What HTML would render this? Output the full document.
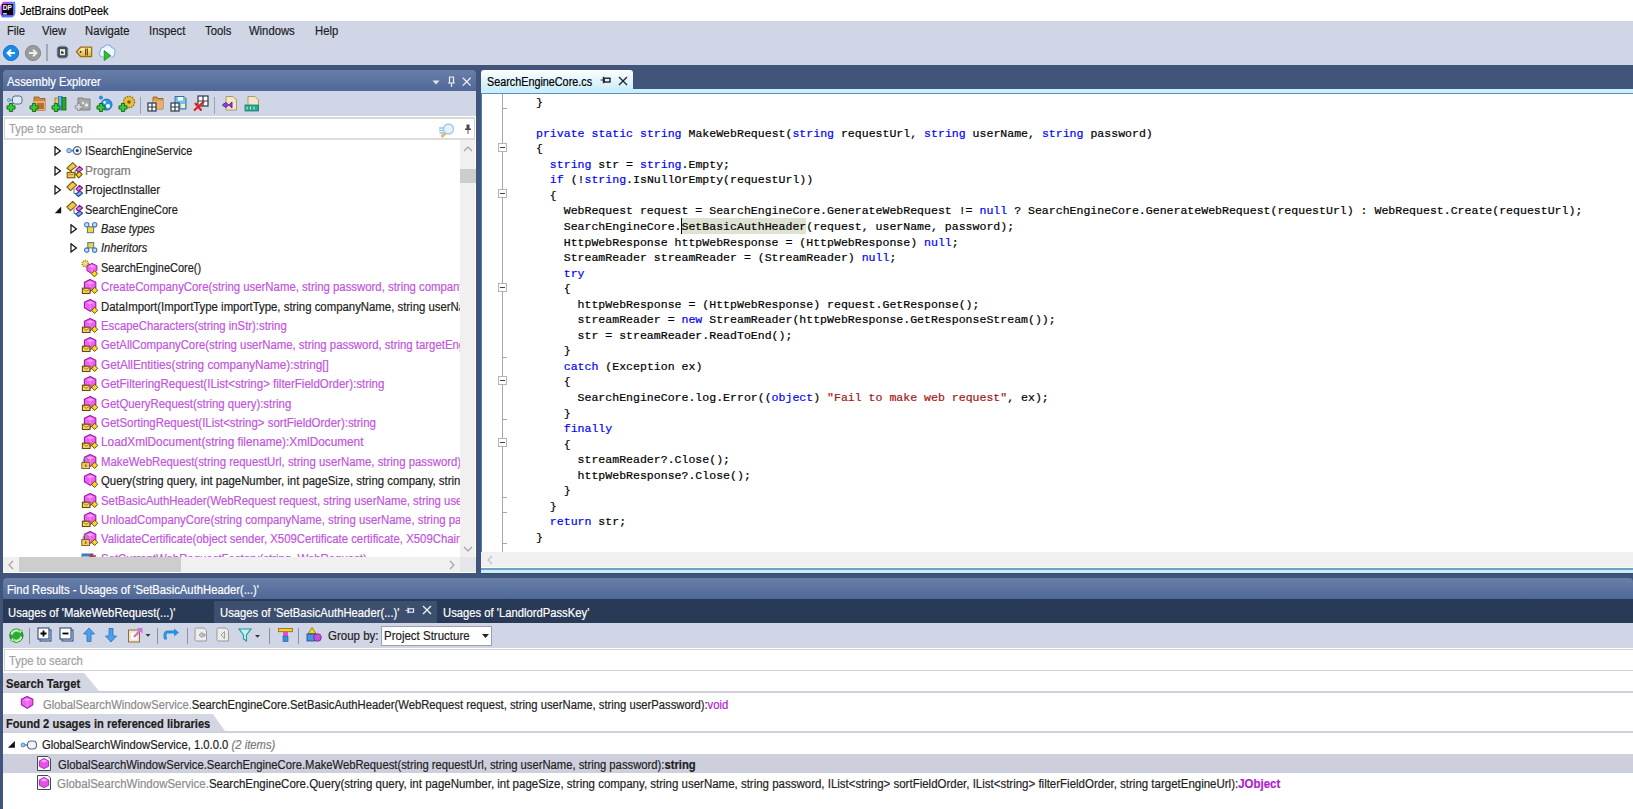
<!DOCTYPE html>
<html><head><meta charset="utf-8">
<style>
*{box-sizing:border-box;margin:0;padding:0}
html,body{width:1633px;height:809px;overflow:hidden}
body{-webkit-text-stroke-width:0.2px;background:#41557a;font-family:"Liberation Sans",sans-serif;font-size:12.3px;color:#1e1e1e;position:relative}
.a{position:absolute}
.t{position:absolute;white-space:pre;line-height:14px;font-size:12.3px;transform:scaleX(.915);transform-origin:0 0}
#title{left:0;top:0;width:1633px;height:21px;background:#fff}
#menubar{left:0;top:21px;width:1633px;height:44px;background:#d0d6e6}
.hdr{background:linear-gradient(#6a7fa8,#4f6898);border-radius:4px 4px 0 0}
.hdr .t{color:#fff}
.tb{background:#d0d6e6}
.sbox{background:#fff;border:1px solid #d3d3d3}
.ph{color:#a2a2a2}
.code{position:absolute;left:536px;top:94.6px;font-family:"Liberation Mono",monospace;font-size:11.55px;line-height:15.54px;white-space:pre;color:#000}
.k{color:#0000ff}
.s{color:#a31515}
.tree .t{color:#1e1e1e}
.tree .t.m{color:#c254de}
.m{color:#d052d8}
.g{color:#8a8a8a}
.row{position:absolute;left:0;width:457px;height:19.4px}
.row .t{top:1px;line-height:19.4px}
.tree .i{font-style:italic}
.tree .g{color:#7a7a7a}
.ic{position:absolute;top:2px;width:18px;height:18px;display:block;overflow:visible}
.hl{background:#dfe3d3;padding:1.5px 0 1px}
.rb{font-weight:bold;color:#1e1e1e}
.rs{color:#1e1e1e}
.rs .g{color:#8c8c8c}
.pv{color:#b020d0}
.it{font-style:italic;color:#7a7a7a}
</style></head><body>
<svg width="0" height="0" style="position:absolute">
<defs>
<symbol id="cube" viewBox="0 0 18 18" overflow="visible"><path d="M9.15 0.4 L14.8 3.2 L14.8 8.8 L9.3 12.4 L3.4 8.8 L3.4 3.2 Z" fill="#f060f0" stroke="#9a1aa8" stroke-width="1.1" stroke-linejoin="round"/><path d="M5.4 3.8 L9.2 2.2 L12.9 3.8 L9.2 5.6 Z" fill="#f8b0f8" opacity="0.8"/><path d="M9.2 5.6 V11" stroke="#f8a0f8" stroke-width="0.7"/></symbol>
<symbol id="dia" viewBox="0 0 18 18" overflow="visible"><path d="M13.6 8.2 L16.8 11.3 L13.6 14.5 L10.6 11.3 Z" fill="#f8d820" stroke="#6a5008" stroke-width="1" stroke-linejoin="round"/></symbol>
<symbol id="env" viewBox="0 0 18 18" overflow="visible"><rect x="1.4" y="9.2" width="7.6" height="5.3" fill="#f4d860" stroke="#6a4a08" stroke-width="1.1"/><path d="M2.4 10.4 L5.2 12.4 L8 10.4" fill="none" stroke="#8a6a18" stroke-width="0.8"/></symbol>
<symbol id="lock" viewBox="0 0 18 18" overflow="visible"><path d="M2.2 8.8 V7 A2.5 2.5 0 0 1 7.2 7 V8.8" fill="none" stroke="#8f8f8f" stroke-width="1.1"/><rect x="0.8" y="8.6" width="7.8" height="6" fill="#f0c868" stroke="#7a5a14" stroke-width="0.9"/><rect x="4.2" y="10.6" width="1.2" height="2" fill="#5a3a00"/></symbol>
<symbol id="gear" viewBox="0 0 18 18" overflow="visible"><circle cx="4.3" cy="3.7" r="3.1" fill="#f4e680" stroke="#a89020" stroke-width="1.6" stroke-dasharray="1.2 0.8"/><circle cx="4.3" cy="3.7" r="1.1" fill="#fffbe0" stroke="#b8a030" stroke-width="0.5"/></symbol>
<symbol id="cls" viewBox="0 0 18 18" overflow="visible"><path d="M6.7 -0.6 L10.6 3.1 L4.5 8.6 L0.9 5 Z" fill="#f2c848" stroke="#7a5a10" stroke-width="1.1" stroke-linejoin="round"/><path d="M8 6.4 V11.5 H10" fill="none" stroke="#5a6a88" stroke-width="1"/><path d="M14 9 L16.6 11.2 L12.4 14.5 L9.8 12 Z" fill="#78b0f0" stroke="#2a4a9a" stroke-width="1.1" stroke-linejoin="round"/><path d="M13.5 3.3 L16.6 6 L12.4 9.3 L10 6.9 Z" fill="#e070f0" stroke="#7a1a8a" stroke-width="1.1" stroke-linejoin="round"/></symbol>
<symbol id="prog" viewBox="0 0 18 18" overflow="visible"><path d="M6.7 -0.4 L10.6 3.4 L4.5 7.8 L0.9 5.2 Z" fill="#f2c848" stroke="#7a5a10" stroke-width="1.1" stroke-linejoin="round"/><path d="M5 7.8 V9.4" stroke="#5a4a10" stroke-width="1.4"/><rect x="1.2" y="9.4" width="7.6" height="5.4" fill="#f4d050" stroke="#7a5410" stroke-width="1.1"/><path d="M2.2 11.2 Q5 12.6 7.8 11.2" fill="none" stroke="#a07a20" stroke-width="0.8"/><path d="M9.2 7 V12.5" stroke="#5a6a88" stroke-width="0.9"/><path d="M13.5 3.4 L16.6 6.1 L12.4 9.2 L10 6.9 Z" fill="#e070f0" stroke="#7a1a8a" stroke-width="1.1" stroke-linejoin="round"/><path d="M13.2 8.5 L16.2 11.4 L12.7 14.8 L10 11.6 Z" fill="#f8d820" stroke="#6a5008" stroke-width="1.1" stroke-linejoin="round"/></symbol>
<symbol id="iface" viewBox="0 0 18 18" overflow="visible"><circle cx="3" cy="7.6" r="2.2" fill="#9ad4f8" stroke="#3a7ab8" stroke-width="0.9"/><path d="M5 7.6 H8" stroke="#4a8ac8" stroke-width="1.8"/><circle cx="11.2" cy="7.6" r="3.9" fill="#f2f6fb" stroke="#5a6a80" stroke-width="1.3"/><circle cx="11.2" cy="7.6" r="1.5" fill="#1a3a80"/></symbol>
<symbol id="base" viewBox="0 0 18 18" overflow="visible"><path d="M5.7 3.7 L8 6.5 M13.65 3.7 L11.2 6.5" stroke="#4a7ac0" stroke-width="1.4"/><circle cx="5.7" cy="3.7" r="2.2" fill="#c8e4fa" stroke="#4a7ac0" stroke-width="1.2"/><circle cx="13.65" cy="3.7" r="2.2" fill="#c8e4fa" stroke="#4a7ac0" stroke-width="1.2"/><rect x="6.4" y="5.8" width="6.2" height="5.9" fill="#f8d820" stroke="#5a7ab0" stroke-width="1.1"/></symbol>
<symbol id="inh" viewBox="0 0 18 18" overflow="visible"><path d="M5.7 10.1 L8 7.5 M13.65 10.1 L11.2 7.5" stroke="#4a7ac0" stroke-width="1.4"/><rect x="6.8" y="2.6" width="5.9" height="5.3" fill="#f8d820" stroke="#5a7ab0" stroke-width="1.1"/><circle cx="5.7" cy="10.1" r="2.2" fill="#c8e4fa" stroke="#4a7ac0" stroke-width="1.2"/><circle cx="13.65" cy="10.1" r="2.2" fill="#c8e4fa" stroke="#4a7ac0" stroke-width="1.2"/></symbol>
<symbol id="fac" viewBox="0 0 18 18" overflow="visible"><rect x="1" y="3" width="11" height="11" fill="#eaf2fa" stroke="#3a6ab0" stroke-width="1"/><rect x="1" y="3" width="11" height="2.5" fill="#3a7ad0"/><path d="M9 5 H15 M11 3 L9 5 L11 7" stroke="#c03030" stroke-width="1.4" fill="none"/></symbol>
<symbol id="iface2" viewBox="0 0 18 16"><circle cx="3" cy="8" r="2" fill="#8cc8f0" stroke="#3a7ab8" stroke-width="0.8"/><path d="M5 8 H8" stroke="#3a7ab8" stroke-width="1.4"/><rect x="7.5" y="4" width="9" height="8" rx="3.5" fill="#eef2f8" stroke="#5a6a80" stroke-width="1.1"/></symbol>
<symbol id="doc" viewBox="0 0 16 17"><path d="M1.5 1.5 H12 L14.5 4 V15.5 H1.5 Z" fill="#f4f6fa" stroke="#404858" stroke-width="1"/><path d="M8 3.6 L12.6 5.9 L12.6 11.3 L8 13.6 L3.4 11.3 L3.4 5.9 Z" fill="#ea4fea" stroke="#9a2a9a" stroke-width="0.9"/><path d="M4.6 6 L8 4.6 L11.4 6 L8 7.6 Z" fill="#f6a8f6"/></symbol>
</defs></svg>
<!-- title bar -->
<div id="title" class="a">
  <svg class="a" style="left:0;top:0" width="18" height="19"><defs><linearGradient id="lg1" x1="0" y1="0" x2="1" y2="1"><stop offset="0" stop-color="#ff3ad0"/><stop offset="0.45" stop-color="#8a4aff"/><stop offset="1" stop-color="#18d8ff"/></linearGradient><linearGradient id="lg2" x1="1" y1="0" x2="0" y2="1"><stop offset="0" stop-color="#20d0ff"/><stop offset="0.5" stop-color="#a040ff"/><stop offset="1" stop-color="#2080ff"/></linearGradient></defs>
  <path d="M3 1.8 H15 V15 L12 17.4 H2 L0.3 14 V6 Z" fill="url(#lg1)"/><path d="M9 2 H14.6 Q15.6 2 15.6 4 V13 L13 17 H3 L1.5 15 Z" fill="url(#lg2)" opacity="0.6"/>
  <rect x="2.1" y="4" width="11" height="11.1" fill="#0c0818"/>
  <text x="2.8" y="9.8" font-family="Liberation Sans" font-weight="bold" font-size="6.6" fill="#fff" style="-webkit-text-stroke-width:0">DP</text>
  <rect x="2.9" y="13" width="4" height="1.6" fill="#c8c8c8"/></svg>
  <div class="t" style="left:20px;top:4px;color:#000;transform:scaleX(.886)">JetBrains dotPeek</div>
</div>
<!-- menu + toolbar -->
<div id="menubar" class="a">
  <div class="t" style="left:7px;top:3px">File</div>
  <div class="t" style="left:42px;top:3px">View</div>
  <div class="t" style="left:85px;top:3px">Navigate</div>
  <div class="t" style="left:149px;top:3px">Inspect</div>
  <div class="t" style="left:205px;top:3px">Tools</div>
  <div class="t" style="left:249px;top:3px">Windows</div>
  <div class="t" style="left:315px;top:3px">Help</div>
  <svg class="a" style="left:2px;top:23px" width="18" height="18"><circle cx="9" cy="9" r="7.6" fill="#1a8ae8" stroke="#0a5ab8" stroke-width="0.8"/><path d="M13 9 H6 M9 5.6 L5.6 9 L9 12.4" fill="none" stroke="#fff" stroke-width="2"/></svg>
  <svg class="a" style="left:24px;top:23px" width="18" height="18"><circle cx="9" cy="9" r="7.6" fill="#9a9a9a" stroke="#7a7a7a" stroke-width="0.8"/><path d="M5 9 H12 M9 5.6 L12.4 9 L9 12.4" fill="none" stroke="#eee" stroke-width="2"/></svg>
  <div class="a" style="left:46px;top:23px;width:2px;height:17px;background:#a0a8b8"></div>
  <svg class="a" style="left:56px;top:24px" width="13" height="14"><rect x="2.8" y="3" width="7.4" height="8.4" fill="#c8d8e0" stroke="#3a4e60" stroke-width="2.2"/><path d="M1.5 3.5 V11 M11.5 3.5 V11 M3.5 1.6 H9.8 M3.5 12.8 H9.8" stroke="#3a4e60" stroke-width="1.5" stroke-dasharray="1 1"/><rect x="4" y="4.5" width="5" height="5.5" fill="#f4eac4"/><path d="M5 6.6 H7 L8 8.4 H5 Z" fill="#10203a"/></svg>
  <svg class="a" style="left:75px;top:24px" width="19" height="14"><defs><linearGradient id="tg" x1="0" y1="0" x2="0" y2="1"><stop offset="0" stop-color="#fff2b0"/><stop offset="1" stop-color="#e0b040"/></linearGradient></defs><path d="M1.4 6.8 L5.6 2.2 H16.6 V11.6 H5.6 Z" fill="url(#tg)" stroke="#9a7010" stroke-width="1.3" stroke-linejoin="round"/><circle cx="5.6" cy="6.9" r="0.9" fill="#222"/><path d="M10.6 3.6 V10.4 M12.4 3.6 V10.4" stroke="#6a5008" stroke-width="1.2"/></svg>
  <svg class="a" style="left:98px;top:21px" width="19" height="20"><path d="M4 15 A3.6 3.6 0 0 1 2.4 9 A3.8 3.8 0 0 1 5.6 5.2 A4.6 4.6 0 0 1 13.8 5.6 A3.6 3.6 0 0 1 16.6 11 A3.2 3.2 0 0 1 14.2 15 Z" fill="#f0f6fd" stroke="#8ab4ec" stroke-width="1.2"/><path d="M6.2 8.6 L12.6 13.6 L6.2 18.6 Z" fill="#30c030" stroke="#108a10" stroke-width="0.8" stroke-linejoin="round"/></svg>
</div>

<!-- Assembly explorer -->
<div class="a" style="left:3px;top:70px;width:473px;height:503px;background:linear-gradient(transparent 20px,#fff 20px)">
  <div class="a hdr" style="left:0;top:0;width:473px;height:21px">
    <div class="t" style="left:4px;top:4.5px">Assembly Explorer</div>
    <svg class="a" style="left:428.5px;top:9.5px" width="9" height="6"><path d="M0.5 0.5 H7.5 L4 4.5 Z" fill="#dfe6f2"/></svg>
    <svg class="a" style="left:443.5px;top:5.5px" width="9" height="12"><path d="M2 1 H7 M2.5 1 V6.5 M6.5 1 V6.5 M1 7 H8 M4.5 7 V11" stroke="#eef2f8" stroke-width="1.2" fill="none"/></svg>
    <svg class="a" style="left:458.5px;top:6.5px" width="10" height="10"><path d="M0.8 0.8 L8.6 8.6 M8.6 0.8 L0.8 8.6" stroke="#eef2f8" stroke-width="1.3"/></svg>
  </div>

  <div class="a tb" style="left:0;top:21px;width:473px;height:25px">
  <svg class="a" style="left:3px;top:4px" width="18" height="18"><rect x="6.5" y="1" width="9.5" height="8" rx="2.5" fill="#dfe8f4" stroke="#5a6a80" stroke-width="1"/><circle cx="3" cy="5" r="1.6" fill="#7ad0f4" stroke="#3a8ac0" stroke-width="0.6"/><path d="M4.6 5 H6.5" stroke="#3a8ac0" stroke-width="1"/><path d="M3.4 8.5 h3.2 v2.4 h2.4 v3.2 h-2.4 v2.4 h-3.2 v-2.4 h-2.4 v-3.2 h2.4 Z" fill="#3cc83c" stroke="#0a6a0a" stroke-width="0.9"/></svg>
  <svg class="a" style="left:26px;top:4px" width="18" height="18"><path d="M5 2 H10 L11 3.5 H16 V15.5 H5 Z" fill="#c88a40" stroke="#9a6020" stroke-width="0.9"/><path d="M5 6 H16 V15.5 H5 Z" fill="#e8b070"/><rect x="8" y="8" width="7" height="6" fill="#b87030"/><path d="M3.4 8.5 h3.2 v2.4 h2.4 v3.2 h-2.4 v2.4 h-3.2 v-2.4 h-2.4 v-3.2 h2.4 Z" fill="#3cc83c" stroke="#0a6a0a" stroke-width="0.9"/></svg>
  <svg class="a" style="left:48px;top:4px" width="18" height="18"><rect x="4" y="3" width="3.5" height="12" fill="#f4c84a" stroke="#8a6a10" stroke-width="0.7"/><rect x="7.5" y="1.5" width="3.5" height="13.5" fill="#5ab8f0" stroke="#2a6ab0" stroke-width="0.7"/><rect x="11" y="2.5" width="4" height="12.5" fill="#2aa82a" stroke="#0a5a0a" stroke-width="0.7"/><path d="M3.4 8.5 h3.2 v2.4 h2.4 v3.2 h-2.4 v2.4 h-3.2 v-2.4 h-2.4 v-3.2 h2.4 Z" fill="#3cc83c" stroke="#0a6a0a" stroke-width="0.9"/></svg>
  <svg class="a" style="left:71px;top:4px" width="18" height="18"><path d="M4 3 H9 L10 4 H16 V15 H4 Z" fill="#a8a8a8" stroke="#7a7a7a" stroke-width="0.9"/><circle cx="12.5" cy="10" r="1.8" fill="#e8e8e8"/><circle cx="9" cy="8" r="1.2" fill="#e8e8e8"/><path d="M3.4 8.4 h2.6 v2.2 h2.2 v2.6 h-2.2 v2.2 h-2.6 v-2.2 h-2.2 v-2.6 h2.2 Z" fill="#d8d8d8" stroke="#8a8a8a" stroke-width="0.8"/></svg>
  <svg class="a" style="left:93px;top:4px" width="18" height="18"><circle cx="10.5" cy="9.6" r="5.5" fill="#2a9ae8" stroke="#1060b0" stroke-width="0.9"/><circle cx="5" cy="2.6" r="1.6" fill="#2a9ae8" stroke="#1060b0" stroke-width="0.6"/><circle cx="12" cy="11" r="2" fill="#fff"/><circle cx="8.6" cy="7.4" r="1.3" fill="#fff"/><path d="M3.4 8.5 h3.2 v2.4 h2.4 v3.2 h-2.4 v2.4 h-3.2 v-2.4 h-2.4 v-3.2 h2.4 Z" fill="#3cc83c" stroke="#0a6a0a" stroke-width="0.9"/></svg>
  <svg class="a" style="left:115px;top:4px" width="18" height="18"><circle cx="11" cy="7" r="5.6" fill="#e8c040" stroke="#9a7010" stroke-width="1.4" stroke-dasharray="1.6 1"/><circle cx="11" cy="7" r="1.8" fill="#7a5a10"/><path d="M3.4 8.5 h3.2 v2.4 h2.4 v3.2 h-2.4 v2.4 h-3.2 v-2.4 h-2.4 v-3.2 h2.4 Z" fill="#3cc83c" stroke="#0a6a0a" stroke-width="0.9"/></svg>
  <div class="a" style="left:137px;top:6px;width:1px;height:17px;background:#9aa2b2"></div>
  <svg class="a" style="left:144px;top:4px" width="18" height="18"><path d="M6 2 H10 L11 3.5 H16 V14 H6 Z" fill="#d89848" stroke="#9a6020" stroke-width="0.9"/><path d="M6 5.5 H16 V14 H6 Z" fill="#e8b070"/><rect x="1" y="8" width="8" height="8" fill="#fff" stroke="#2a3a4a" stroke-width="1.2"/><path d="M5 8 V16 M1 12 H9" stroke="#2a3a4a" stroke-width="1.2"/></svg>
  <svg class="a" style="left:167px;top:4px" width="18" height="18"><path d="M5 1.5 H14 L16 3.5 V14 H5 Z" fill="#7ac0ec" stroke="#2a6a9a" stroke-width="0.9"/><rect x="8" y="2" width="5" height="3.5" fill="#fff"/><rect x="11" y="9" width="4" height="4" fill="#f4f0b0"/><rect x="1" y="8" width="8" height="8" fill="#fff" stroke="#2a3a4a" stroke-width="1.2"/><path d="M5 8 V16 M1 12 H9" stroke="#2a3a4a" stroke-width="1.2"/></svg>
  <svg class="a" style="left:189px;top:4px" width="18" height="18"><rect x="6" y="1" width="10" height="10" fill="#fff" stroke="#2a3a4a" stroke-width="1.2"/><path d="M11 1 V11 M6 6 H16" stroke="#2a3a4a" stroke-width="1.2"/><path d="M2 15.5 L12 6.5 M3 8 L9.5 15.5" stroke="#e02020" stroke-width="2.2"/></svg>
  <div class="a" style="left:211px;top:6px;width:1px;height:17px;background:#9aa2b2"></div>
  <svg class="a" style="left:218px;top:4px" width="18" height="18"><path d="M5 1.5 H12 L15.5 5 V15 H5 Z" fill="#f2e6c8" stroke="#a89060" stroke-width="0.9"/><path d="M1.8 9.5 L5 7.5 L11 13 V7 L5 12.5 L1.8 10.5 Z" fill="#8a40d8" stroke="#5a2090" stroke-width="0.9"/></svg>
  <svg class="a" style="left:240px;top:4px" width="18" height="18"><path d="M5 1.5 H12 L15.5 5 V15 H5 Z" fill="#f2e6c8" stroke="#a89060" stroke-width="0.9"/><rect x="2" y="10" width="13.5" height="6" fill="#28a890" stroke="#107060" stroke-width="0.7"/><path d="M4 11.5 v3 M7.5 11.5 v3 M11 11.5 v3" stroke="#c8f0e0" stroke-width="1"/></svg>
  </div>
  <div class="a sbox" style="left:1px;top:47px;width:471px;height:23px;border-top:2px solid #d8d8d8;border-bottom:2px solid #dcdcdc">
    <div class="t ph" style="left:4px;top:3px">Type to search</div>
    <svg class="a" style="left:433px;top:3px" width="18" height="17"><path d="M1 6 H6 M1 8.5 H5 M1.5 11 H6" stroke="#8cc8ee" stroke-width="1.6"/><path d="M3.5 15 L7.5 11" stroke="#e8b860" stroke-width="3"/><circle cx="10.5" cy="7" r="5" fill="#e4f2fb" stroke="#9ac8e8" stroke-width="1.3"/></svg>
    <svg class="a" style="left:458.5px;top:3.5px" width="9" height="13"><path d="M2.5 1.5 H5.5 V5.5 H7 V7 H1 V5.5 H2.5 Z" fill="#4a4a4a"/><path d="M4 7 V11" stroke="#666" stroke-width="1.1"/></svg>
  </div>
  <div class="a tree" id="tree" style="left:0;top:70px;width:457px;height:417px;overflow:hidden"><div class="row" style="top:1.3px"><svg class="a" style="left:50.5px;top:5px" width="9" height="11"><path d="M1 0.8 L6.4 4.9 L1 9 Z" fill="none" stroke="#111" stroke-width="1.2" stroke-linejoin="miter"/></svg><svg class="ic" style="left:63px" width="18" height="18" viewBox="0 0 18 18"><use href="#iface" width="18" height="18"/></svg><div class="t " style="left:82.2px;transform:scaleX(0.881)">ISearchEngineService</div></div><div class="row" style="top:20.7px"><svg class="a" style="left:50.5px;top:5px" width="9" height="11"><path d="M1 0.8 L6.4 4.9 L1 9 Z" fill="none" stroke="#111" stroke-width="1.2" stroke-linejoin="miter"/></svg><svg class="ic" style="left:63px" width="18" height="18" viewBox="0 0 18 18"><use href="#prog" width="18" height="18"/></svg><div class="t g" style="left:82.2px;transform:scaleX(0.969)">Program</div></div><div class="row" style="top:40.1px"><svg class="a" style="left:50.5px;top:5px" width="9" height="11"><path d="M1 0.8 L6.4 4.9 L1 9 Z" fill="none" stroke="#111" stroke-width="1.2" stroke-linejoin="miter"/></svg><svg class="ic" style="left:63px" width="18" height="18" viewBox="0 0 18 18"><use href="#cls" width="18" height="18"/></svg><div class="t " style="left:82.2px;transform:scaleX(0.923)">ProjectInstaller</div></div><div class="row" style="top:59.5px"><svg class="a" style="left:50.5px;top:5px" width="9" height="10"><path d="M0.8 8.2 L7.2 1.5 L7.2 8.2 Z" fill="#111"/></svg><svg class="ic" style="left:63px" width="18" height="18" viewBox="0 0 18 18"><use href="#cls" width="18" height="18"/></svg><div class="t " style="left:82.2px;transform:scaleX(0.894)">SearchEngineCore</div></div><div class="row" style="top:78.9px"><svg class="a" style="left:66.5px;top:5px" width="9" height="11"><path d="M1 0.8 L6.4 4.9 L1 9 Z" fill="none" stroke="#111" stroke-width="1.2" stroke-linejoin="miter"/></svg><svg class="ic" style="left:78px" width="18" height="18" viewBox="0 0 18 18"><use href="#base" width="18" height="18"/></svg><div class="t i" style="left:98.2px;transform:scaleX(0.884)">Base types</div></div><div class="row" style="top:98.3px"><svg class="a" style="left:66.5px;top:5px" width="9" height="11"><path d="M1 0.8 L6.4 4.9 L1 9 Z" fill="none" stroke="#111" stroke-width="1.2" stroke-linejoin="miter"/></svg><svg class="ic" style="left:78px" width="18" height="18" viewBox="0 0 18 18"><use href="#inh" width="18" height="18"/></svg><div class="t i" style="left:98.2px;transform:scaleX(0.904)">Inheritors</div></div><div class="row" style="top:117.7px"><svg class="ic" style="left:78px" width="18" height="18" viewBox="0 0 18 18"><use href="#gear" width="18" height="18"/><use href="#cube" x="3" y="3" width="15.7" height="15.7"/><use href="#dia" x="-0.2" y="2.4" width="18" height="18"/></svg><div class="t " style="left:98.2px;transform:scaleX(0.893)">SearchEngineCore()</div></div><div class="row" style="top:137.1px"><svg class="ic" style="left:78px" width="18" height="18" viewBox="0 0 18 18"><use href="#cube" width="18" height="18"/><use href="#env" width="18" height="18"/><use href="#dia" width="18" height="18"/></svg><div class="t m" style="left:98.2px;transform:scaleX(0.925)">CreateCompanyCore(string userName, string password, string companyName)</div></div><div class="row" style="top:156.5px"><svg class="ic" style="left:78px" width="18" height="18" viewBox="0 0 18 18"><use href="#cube" width="18" height="18"/><use href="#dia" width="18" height="18"/></svg><div class="t " style="left:98.2px;transform:scaleX(0.925)">DataImport(ImportType importType, string companyName, string userName)</div></div><div class="row" style="top:175.9px"><svg class="ic" style="left:78px" width="18" height="18" viewBox="0 0 18 18"><use href="#cube" width="18" height="18"/><use href="#env" width="18" height="18"/><use href="#dia" width="18" height="18"/></svg><div class="t m" style="left:98.2px;transform:scaleX(0.921)">EscapeCharacters(string inStr):string</div></div><div class="row" style="top:195.3px"><svg class="ic" style="left:78px" width="18" height="18" viewBox="0 0 18 18"><use href="#cube" width="18" height="18"/><use href="#env" width="18" height="18"/><use href="#dia" width="18" height="18"/></svg><div class="t m" style="left:98.2px;transform:scaleX(0.925)">GetAllCompanyCore(string userName, string password, string targetEngineUrl)</div></div><div class="row" style="top:214.7px"><svg class="ic" style="left:78px" width="18" height="18" viewBox="0 0 18 18"><use href="#cube" width="18" height="18"/><use href="#env" width="18" height="18"/><use href="#dia" width="18" height="18"/></svg><div class="t m" style="left:98.2px;transform:scaleX(0.955)">GetAllEntities(string companyName):string[]</div></div><div class="row" style="top:234.1px"><svg class="ic" style="left:78px" width="18" height="18" viewBox="0 0 18 18"><use href="#cube" width="18" height="18"/><use href="#env" width="18" height="18"/><use href="#dia" width="18" height="18"/></svg><div class="t m" style="left:98.2px;transform:scaleX(0.936)">GetFilteringRequest(IList&lt;string&gt; filterFieldOrder):string</div></div><div class="row" style="top:253.5px"><svg class="ic" style="left:78px" width="18" height="18" viewBox="0 0 18 18"><use href="#cube" width="18" height="18"/><use href="#env" width="18" height="18"/><use href="#dia" width="18" height="18"/></svg><div class="t m" style="left:98.2px;transform:scaleX(0.928)">GetQueryRequest(string query):string</div></div><div class="row" style="top:272.9px"><svg class="ic" style="left:78px" width="18" height="18" viewBox="0 0 18 18"><use href="#cube" width="18" height="18"/><use href="#env" width="18" height="18"/><use href="#dia" width="18" height="18"/></svg><div class="t m" style="left:98.2px;transform:scaleX(0.931)">GetSortingRequest(IList&lt;string&gt; sortFieldOrder):string</div></div><div class="row" style="top:292.3px"><svg class="ic" style="left:78px" width="18" height="18" viewBox="0 0 18 18"><use href="#cube" width="18" height="18"/><use href="#env" width="18" height="18"/><use href="#dia" width="18" height="18"/></svg><div class="t m" style="left:98.2px;transform:scaleX(0.96)">LoadXmlDocument(string filename):XmlDocument</div></div><div class="row" style="top:311.7px"><svg class="ic" style="left:78px" width="18" height="18" viewBox="0 0 18 18"><use href="#cube" width="18" height="18"/><use href="#lock" width="18" height="18"/><use href="#dia" width="18" height="18"/></svg><div class="t m" style="left:98.2px;transform:scaleX(0.925)">MakeWebRequest(string requestUrl, string userName, string password):string</div></div><div class="row" style="top:331.1px"><svg class="ic" style="left:78px" width="18" height="18" viewBox="0 0 18 18"><use href="#cube" width="18" height="18"/><use href="#dia" width="18" height="18"/></svg><div class="t " style="left:98.2px;transform:scaleX(0.925)">Query(string query, int pageNumber, int pageSize, string company, string userName)</div></div><div class="row" style="top:350.5px"><svg class="ic" style="left:78px" width="18" height="18" viewBox="0 0 18 18"><use href="#cube" width="18" height="18"/><use href="#env" width="18" height="18"/><use href="#dia" width="18" height="18"/></svg><div class="t m" style="left:98.2px;transform:scaleX(0.925)">SetBasicAuthHeader(WebRequest request, string userName, string userPassword):void</div></div><div class="row" style="top:369.9px"><svg class="ic" style="left:78px" width="18" height="18" viewBox="0 0 18 18"><use href="#cube" width="18" height="18"/><use href="#env" width="18" height="18"/><use href="#dia" width="18" height="18"/></svg><div class="t m" style="left:98.2px;transform:scaleX(0.925)">UnloadCompanyCore(string companyName, string userName, string password)</div></div><div class="row" style="top:389.3px"><svg class="ic" style="left:78px" width="18" height="18" viewBox="0 0 18 18"><use href="#cube" width="18" height="18"/><use href="#lock" width="18" height="18"/><use href="#dia" width="18" height="18"/></svg><div class="t m" style="left:98.2px;transform:scaleX(0.925)">ValidateCertificate(object sender, X509Certificate certificate, X509Chain chain)</div></div><div class="row" style="top:408.7px"><svg class="ic" style="left:78px" width="18" height="18" viewBox="0 0 18 18"><use href="#fac" width="18" height="18"/></svg><div class="t m" style="left:98.2px;transform:scaleX(0.925)">SetCurrentWebRequestFactory(string, WebRequest)</div></div></div>
  <!-- v scrollbar -->
  <div class="a" style="left:456.5px;top:70px;width:15.5px;height:417px;background:#f0f0f0">
    <svg class="a" style="left:3px;top:6px" width="10" height="6"><path d="M1 5 L5 1 L9 5" fill="none" stroke="#a0a0a0" stroke-width="1.1"/></svg>
    <div class="a" style="left:0;top:29px;width:16px;height:14px;background:#cdcdcd"></div>
    <svg class="a" style="left:3.5px;top:406px" width="10" height="6"><path d="M1 1 L5 5 L9 1" fill="none" stroke="#a0a0a0" stroke-width="1.1"/></svg>
  </div>
  <!-- h scrollbar -->
  <div class="a" style="left:0;top:487px;width:473px;height:16px;background:#f0f0f0">
    <svg class="a" style="left:5px;top:3px" width="6" height="10"><path d="M5 1 L1 5 L5 9" fill="none" stroke="#a0a0a0" stroke-width="1.1"/></svg>
    <div class="a" style="left:16px;top:0;width:162px;height:15px;background:#cdcdcd"></div>
    <svg class="a" style="left:446px;top:3px" width="6" height="10"><path d="M1 1 L5 5 L1 9" fill="none" stroke="#a0a0a0" stroke-width="1.1"/></svg>
    <div class="a" style="left:457px;top:0;width:16px;height:15px;background:#e6e6ea"></div>
    <div class="a" style="left:0;top:15px;width:473px;height:1px;background:#fff"></div>
  </div>
</div>

<!-- Editor -->
<div class="a" style="left:481px;top:89px;width:1152px;height:484px;background:#cbeefb"></div>
<div class="a" style="left:481px;top:93px;width:1152px;height:1px;background:#5b8fc1"></div>
<div class="a" style="left:481px;top:94px;width:1152px;height:458px;background:#fff"></div>
<div class="a" style="left:481px;top:94px;width:1px;height:474px;background:#4a80b0"></div>
<div class="a" style="left:481px;top:552px;width:1152px;height:15px;background:#f0f0f0"></div>
<div class="a" style="left:481px;top:567px;width:1152px;height:1px;background:#fdfbf8"></div>
<div class="a" style="left:481px;top:568px;width:1152px;height:2px;background:#6ea0c8"></div>
<div class="a" style="left:481px;top:573px;width:1152px;height:1px;background:#3a4a6a"></div>
<div class="a" style="left:481px;top:70px;width:152px;height:19px;background:linear-gradient(#fdfeff,#cbeefb);border-radius:3px 3px 0 0">
  <div class="t" style="left:6px;top:5px;color:#000;transform:scaleX(.878)">SearchEngineCore.cs</div>
  <svg class="a" style="left:119px;top:6px" width="12" height="9"><path d="M0.5 4 H3" stroke="#555" stroke-width="1.2"/><path d="M3.5 0.8 V7.2" stroke="#222" stroke-width="1.4"/><rect x="4.2" y="2.2" width="5.8" height="3.8" fill="none" stroke="#222" stroke-width="1.4"/></svg>
  <svg class="a" style="left:137px;top:6px" width="10" height="10"><path d="M1 1 L9 9 M9 1 L1 9" stroke="#222" stroke-width="1.3"/></svg>
</div>
<svg class="a" style="left:487px;top:555px" width="6" height="10"><path d="M5 1 L1 5 L5 9" fill="none" stroke="#c0c0c0" stroke-width="1.1"/></svg>
<div class="a" style="left:502px;top:94px;width:1px;height:458px;background:#a8a8a8"></div>
<div class="a" style="left:498px;top:142.7px;width:9px;height:9px;background:#fff;border:1px solid #b4b4b4"><div class="a" style="left:1px;top:3px;width:5px;height:1px;background:#444"></div></div><div class="a" style="left:498px;top:189.3px;width:9px;height:9px;background:#fff;border:1px solid #b4b4b4"><div class="a" style="left:1px;top:3px;width:5px;height:1px;background:#444"></div></div><div class="a" style="left:498px;top:282.6px;width:9px;height:9px;background:#fff;border:1px solid #b4b4b4"><div class="a" style="left:1px;top:3px;width:5px;height:1px;background:#444"></div></div><div class="a" style="left:498px;top:375.8px;width:9px;height:9px;background:#fff;border:1px solid #b4b4b4"><div class="a" style="left:1px;top:3px;width:5px;height:1px;background:#444"></div></div><div class="a" style="left:498px;top:437.9px;width:9px;height:9px;background:#fff;border:1px solid #b4b4b4"><div class="a" style="left:1px;top:3px;width:5px;height:1px;background:#444"></div></div><div class="a" style="left:502px;top:108.0px;width:5px;height:1px;background:#a8a8a8"></div><div class="a" style="left:502px;top:356.6px;width:5px;height:1px;background:#a8a8a8"></div><div class="a" style="left:502px;top:418.8px;width:5px;height:1px;background:#a8a8a8"></div><div class="a" style="left:502px;top:496.5px;width:5px;height:1px;background:#a8a8a8"></div><div class="a" style="left:502px;top:512.0px;width:5px;height:1px;background:#a8a8a8"></div><div class="a" style="left:502px;top:543.1px;width:5px;height:1px;background:#a8a8a8"></div>
<div class="a" style="left:681px;top:218px;width:2px;height:16px;background:#000"></div>
<div class="code" id="code"><span class="br">}</span>

<span class="k">private</span> <span class="k">static</span> <span class="k">string</span> MakeWebRequest(<span class="k">string</span> requestUrl, <span class="k">string</span> userName, <span class="k">string</span> password)
<span class="br">{</span>
  <span class="k">string</span> str = <span class="k">string</span>.Empty;
  <span class="k">if</span> (!<span class="k">string</span>.IsNullOrEmpty(requestUrl))
  <span class="br">{</span>
    WebRequest request = SearchEngineCore.GenerateWebRequest != <span class="k">null</span> ? SearchEngineCore.GenerateWebRequest(requestUrl) : WebRequest.Create(requestUrl);
    SearchEngineCore.<span class="hl">SetBasicAuthHeader</span>(request, userName, password);
    HttpWebResponse httpWebResponse = (HttpWebResponse) <span class="k">null</span>;
    StreamReader streamReader = (StreamReader) <span class="k">null</span>;
    <span class="k">try</span>
    <span class="br">{</span>
      httpWebResponse = (HttpWebResponse) request.GetResponse();
      streamReader = <span class="k">new</span> StreamReader(httpWebResponse.GetResponseStream());
      str = streamReader.ReadToEnd();
    <span class="br">}</span>
    <span class="k">catch</span> (Exception ex)
    <span class="br">{</span>
      SearchEngineCore.log.Error((<span class="k">object</span>) <span class="s">&quot;Fail to make web request&quot;</span>, ex);
    <span class="br">}</span>
    <span class="k">finally</span>
    <span class="br">{</span>
      streamReader?.Close();
      httpWebResponse?.Close();
    <span class="br">}</span>
  <span class="br">}</span>
  <span class="k">return</span> str;
<span class="br">}</span></div>

<!-- Find results -->
<div class="a" style="left:3px;top:578px;width:1630px;height:231px;background:linear-gradient(transparent 20px,#fff 20px)">
  <div class="a hdr" style="left:0;top:0;width:1630px;height:21px">
    <div class="t" style="left:4px;top:4.5px">Find Results - Usages of 'SetBasicAuthHeader(...)'</div>
  </div>
  <div class="a" style="left:0;top:21px;width:1630px;height:24px;background:#293a56">
    <div class="t" style="left:5px;top:7px;color:#fff">Usages of 'MakeWebRequest(...)'</div>
    <div class="a" style="left:211px;top:2px;width:223px;height:22px;background:#3d4f6e"></div>
    <div class="t" style="left:217px;top:7px;color:#fff">Usages of 'SetBasicAuthHeader(...)'</div>
    <svg class="a" style="left:402px;top:8px" width="10" height="8"><path d="M0.5 3.5 H2.5" stroke="#dde" stroke-width="1"/><path d="M3 0.8 V6.2" stroke="#eef" stroke-width="1.2"/><rect x="3.6" y="1.8" width="5" height="3.4" fill="none" stroke="#eef" stroke-width="1.1"/></svg>
    <svg class="a" style="left:419px;top:6px" width="10" height="10"><path d="M1 1 L9 9 M9 1 L1 9" stroke="#eef2f8" stroke-width="1.3"/></svg>
    <div class="t" style="left:440px;top:7px;color:#fff">Usages of 'LandlordPassKey'</div>
  </div>
  <div class="a tb" style="left:0;top:45px;width:1630px;height:25px">
  <svg class="a" style="left:4px;top:3px" width="18" height="18"><circle cx="9.4" cy="9.6" r="6.6" fill="#30a838" stroke="#107a18" stroke-width="1"/><path d="M4.6 8.6 A4.8 4.8 0 0 1 13.2 6.4" fill="none" stroke="#b8f8b0" stroke-width="2.2"/><path d="M14.2 10.6 A4.8 4.8 0 0 1 5.6 12.8" fill="none" stroke="#b8f8b0" stroke-width="2.2"/><path d="M11.4 3.2 L15.4 4.6 L13.2 8 Z M7.4 16 L3.4 14.6 L5.6 11.2 Z" fill="#c8f8c0" stroke="#2a9a30" stroke-width="0.6"/></svg>
  <div class="a" style="left:26px;top:5px;width:1px;height:16px;background:#8a92a4"></div>
  <svg class="a" style="left:33px;top:3px" width="18" height="18"><rect x="4" y="4" width="11" height="11" fill="#c8d8f0" stroke="#2a4a7a" stroke-width="1"/><rect x="2" y="2" width="11" height="11" fill="#fff" stroke="#2a4a7a" stroke-width="1.1"/><path d="M7.5 4.5 V10.5 M4.5 7.5 H10.5" stroke="#000" stroke-width="1.8"/></svg>
  <svg class="a" style="left:55px;top:3px" width="18" height="18"><rect x="4" y="4" width="11" height="11" fill="#c8d8f0" stroke="#2a4a7a" stroke-width="1"/><rect x="2" y="2" width="11" height="11" fill="#fff" stroke="#2a4a7a" stroke-width="1.1"/><path d="M4.5 7.5 H10.5" stroke="#000" stroke-width="1.8"/></svg>
  <svg class="a" style="left:79px;top:3px" width="14" height="18"><path d="M7 2 L12.5 8 H9 V15.5 H5 V8 H1.5 Z" fill="#4aa0ec" stroke="#2a70c0" stroke-width="0.8"/></svg>
  <svg class="a" style="left:101px;top:3px" width="14" height="18"><path d="M7 16 L12.5 10 H9 V2.5 H5 V10 H1.5 Z" fill="#4aa0ec" stroke="#2a70c0" stroke-width="0.8"/></svg>
  <svg class="a" style="left:124px;top:3px" width="26" height="18"><rect x="1.5" y="4" width="11" height="12" fill="#f2e4c4" stroke="#8a7040" stroke-width="1"/><rect x="4" y="6.5" width="6" height="7" fill="#fff"/><path d="M7 11 L13 4.5" stroke="#d070d8" stroke-width="2.4"/><path d="M10 2 H15.5 V7.5 Z" fill="#d070d8"/><path d="M18.5 8 H23.5 L21 10.8 Z" fill="#333"/></svg>
  <div class="a" style="left:154px;top:5px;width:1px;height:16px;background:#8a92a4"></div>
  <svg class="a" style="left:160px;top:3px" width="18" height="18"><path d="M2 12 V8.5 A2.5 2.5 0 0 1 4.5 6 H12" fill="none" stroke="#2a90e0" stroke-width="3"/><path d="M11 2.5 L16 6.5 L11 10.5 Z" fill="#2a90e0"/><path d="M1 12.5 H4" stroke="#2a90e0" stroke-width="2"/></svg>
  <div class="a" style="left:184px;top:5px;width:1px;height:16px;background:#8a92a4"></div>
  <svg class="a" style="left:190px;top:3px" width="16" height="18"><path d="M2 3.5 Q2 2 3.5 2 H11 L13.5 4.5 V15 H3.5 Q2 15 2 13.5 Z" fill="#ececec" stroke="#9a9a9a" stroke-width="1"/><path d="M6 9 L9 6.5 V8 H12 V10 H9 V11.5 Z" fill="#d0d0d0" stroke="#8a8a8a" stroke-width="0.8"/></svg>
  <svg class="a" style="left:212px;top:3px" width="16" height="18"><path d="M2 3.5 Q2 2 3.5 2 H11 L13.5 4.5 V15 H3.5 Q2 15 2 13.5 Z" fill="#ececec" stroke="#9a9a9a" stroke-width="1"/><path d="M6 9 L9.5 5.5 V12.5 Z" fill="#e8e8e8" stroke="#8a8a8a" stroke-width="0.8"/></svg>
  <svg class="a" style="left:234px;top:3px" width="26" height="18"><path d="M2 3 H14 L9.5 9 V15 L6.5 13 V9 Z" fill="#c0f0f0" stroke="#1a9a9a" stroke-width="1.1"/><path d="M18 9 H23 L20.5 11.8 Z" fill="#333"/></svg>
  <div class="a" style="left:266px;top:5px;width:1px;height:16px;background:#8a92a4"></div>
  <svg class="a" style="left:274px;top:3px" width="18" height="18"><rect x="1.5" y="2.5" width="14" height="3.2" fill="#f4d020" stroke="#8a6a10" stroke-width="0.8"/><rect x="6" y="5.7" width="5" height="4.5" fill="#e050c8"/><rect x="6" y="10.2" width="5" height="5.3" fill="#3a90e0" stroke="#1a5aa0" stroke-width="0.6"/></svg>
  <div class="a" style="left:295px;top:5px;width:1px;height:16px;background:#8a92a4"></div>
  <svg class="a" style="left:302px;top:3px" width="18" height="18"><path d="M7 1.5 L11 7.5 H3 Z" fill="#f4d020" stroke="#8a6a10" stroke-width="0.8"/><rect x="2" y="8" width="8" height="7" fill="#4a90e0" stroke="#1a4a90" stroke-width="0.8"/><circle cx="12.5" cy="11.5" r="3.8" fill="#c050d8" stroke="#702090" stroke-width="0.8"/></svg>
  <div class="t" style="left:325px;top:6px;transform:scaleX(.935)">Group by:</div>
  <div class="a" style="left:378px;top:3px;width:111px;height:20px;background:#fff;border:1px solid #9aa0ac">
    <div class="t" style="left:2px;top:2px;transform:scaleX(.935)">Project Structure</div>
    <svg class="a" style="left:100px;top:7px" width="8" height="5"><path d="M0 0 H7 L3.5 4 Z" fill="#222"/></svg>
  </div>
  </div>
  <div class="a sbox" style="left:1px;top:71px;width:1640px;height:22px">
    <div class="t ph" style="left:4px;top:4px">Type to search</div>
  </div>
  <div class="a" style="left:0;top:113px;width:1630px;height:2px;background:#cdd1dd"></div>
  <div class="a" style="left:0;top:95px;width:96px;height:18px;background:#d4d7e2;clip-path:polygon(0 0,81px 0,100% 100%,0 100%)"></div>
  <div class="t rb" style="left:3px;top:98.5px">Search Target</div>
  <svg class="a" style="left:15.3px;top:118.4px;overflow:visible" width="18" height="18"><use href="#cube" width="18" height="18"/></svg>
  <div class="t rs" style="left:40px;top:120px"><span class="g">GlobalSearchWindowService.</span>SearchEngineCore.SetBasicAuthHeader(WebRequest request, string userName, string userPassword):<span class="pv">void</span></div>
  <div class="a" style="left:0;top:153px;width:1630px;height:2px;background:#cdd1dd"></div>
  <div class="a" style="left:0;top:136px;width:222px;height:17px;background:#d4d7e2;clip-path:polygon(0 0,210px 0,100% 100%,0 100%)"></div>
  <div class="t rb" style="left:3px;top:139px;transform:scaleX(.906)">Found 2 usages in referenced libraries</div>
  <svg class="a" style="left:3.5px;top:162px" width="9" height="10"><path d="M0.9 7.7 L7.9 1 L7.9 7.7 Z" fill="#111"/></svg>
  <svg class="a" style="left:17px;top:159px" width="18" height="16"><use href="#iface2"/></svg>
  <div class="t rs" style="left:39px;top:160px">GlobalSearchWindowService, 1.0.0.0 <span class="it">(2 items)</span></div>
  <div class="a" style="left:0;top:176px;width:1630px;height:19px;background:#cdd0dc"></div>
  <svg class="a" style="left:33px;top:177px" width="16" height="17"><use href="#doc"/></svg>
  <div class="t rs" style="left:55px;top:179.5px">GlobalSearchWindowService.SearchEngineCore.MakeWebRequest(string requestUrl, string userName, string password):<b>string</b></div>
  <svg class="a" style="left:33px;top:196px" width="16" height="17"><use href="#doc"/></svg>
  <div class="t rs" style="left:54px;top:198.5px;transform:scaleX(.934)"><span class="g">GlobalSearchWindowService.</span>SearchEngineCore.Query(string query, int pageNumber, int pageSize, string company, string userName, string password, IList&lt;string&gt; sortFieldOrder, IList&lt;string&gt; filterFieldOrder, string targetEngineUrl):<b class="pv">JObject</b></div>
</div>
</body></html>
